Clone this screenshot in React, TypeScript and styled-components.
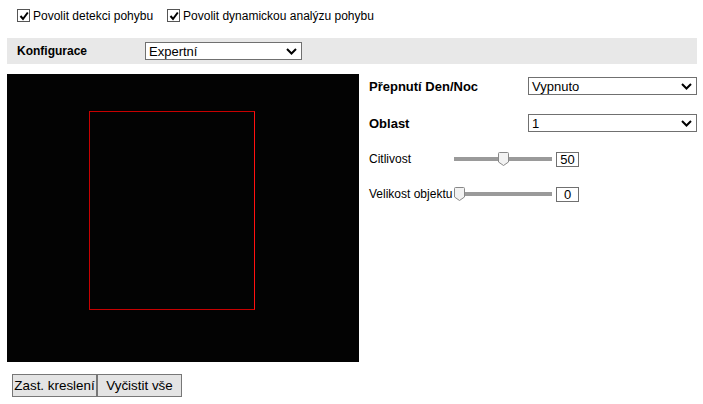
import React from 'react';
import styled, { createGlobalStyle } from 'styled-components';

const GlobalStyle = createGlobalStyle`
  html, body {
    margin: 0;
    padding: 0;
    background: #fff;
    font-family: "Liberation Sans", Arial, sans-serif;
    font-size: 12px;
    color: #000;
  }
`;

const Page = styled.div`
  width: 703px;
  height: 404px;
  padding-left: 7px;
  box-sizing: border-box;
`;

const CheckRow = styled.div`
  display: flex;
  align-items: center;
  gap: 14px;
  height: 31px;
  padding-left: 10px;
`;

const CheckLabel = styled.label`
  display: flex;
  align-items: center;
  gap: 3px;
  font-size: 12px;
`;

const Box = styled.span`
  width: 11px;
  height: 11px;
  border: 1px solid #555;
  background: #fff;
  display: flex;
  align-items: center;
  justify-content: center;
`;

const ConfigBar = styled.div`
  width: 690px;
  height: 26px;
  margin-top: 7px;
  background: #e8e8e8;
  display: flex;
  align-items: center;
  padding-left: 10px;
  box-sizing: border-box;
`;

const BarLabel = styled.span`
  width: 128px;
  font-weight: bold;
  font-size: 12px;
`;

const SelectBox = styled.div<{ $width: number }>`
  width: ${p => p.$width}px;
  height: 18px;
  box-sizing: border-box;
  border: 1px solid #707070;
  background: #fff;
  display: flex;
  align-items: center;
  justify-content: space-between;
  padding: 0 4px 0 3px;
  font-size: 13px;
`;

const Main = styled.div`
  display: flex;
  margin-top: 10px;
  gap: 10px;
`;

const Video = styled.div`
  width: 352px;
  height: 288px;
  background: #030303;
  position: relative;
`;

const Region = styled.div`
  position: absolute;
  left: 82px;
  top: 37px;
  width: 164px;
  height: 197px;
  border: 1px solid #c80000;
  border-right-color: #ff1010;
`;

const Panel = styled.div`
  display: flex;
  flex-direction: column;
  padding-top: 3px;
`;

const FieldRow = styled.div`
  display: flex;
  align-items: center;
  height: 18px;
  margin-bottom: 19px;
`;

const FieldLabel = styled.span`
  width: 159px;
  font-weight: bold;
  font-size: 13px;
`;

const SliderRow = styled.div`
  display: flex;
  align-items: center;
  height: 16px;
  margin-bottom: 19px;
`;

const SliderLabel = styled.span`
  width: 85px;
  white-space: nowrap;
  font-size: 12px;
`;

const Track = styled.div`
  position: relative;
  width: 98px;
  height: 16px;
  display: flex;
  align-items: center;
`;

const TrackLine = styled.div`
  width: 100%;
  height: 4px;
  background: #9a9a9a;
`;

const Thumb = styled.svg`
  position: absolute;
  top: 1px;
  width: 11px;
  height: 14px;
`;

const ValueBox = styled.div`
  width: 23px;
  height: 15px;
  margin-left: 4px;
  box-sizing: border-box;
  border: 1px solid #707070;
  display: flex;
  align-items: center;
  justify-content: center;
  font-size: 13px;
`;

const ButtonRow = styled.div`
  display: flex;
  margin-top: 12px;
  padding-left: 5px;
`;

const Button = styled.button`
  min-width: 85px;
  height: 23px;
  padding: 0 1px;
  border: 1px solid #777;
  background: #e4e4e4;
  font-family: "Liberation Sans", Arial, sans-serif;
  font-size: 13.4px;
  color: #000;
  margin: 0;
`;

const Chevron = () => (
  <svg width="11" height="7" viewBox="0 0 11 7">
    <path d="M1 1 L5.5 5.5 L10 1" fill="none" stroke="#000" strokeWidth="2" />
  </svg>
);

const Check = () => (
  <svg width="10" height="10" viewBox="0 0 10 10">
    <path d="M1.5 5 L4 8 L8.8 1.5" fill="none" stroke="#000" strokeWidth="2" />
  </svg>
);

const Checkbox: React.FC<{ label: string }> = ({ label }) => (
  <CheckLabel>
    <Box>
      <Check />
    </Box>
    {label}
  </CheckLabel>
);

const Select: React.FC<{ value: string; width: number }> = ({ value, width }) => (
  <SelectBox $width={width}>
    <span>{value}</span>
    <Chevron />
  </SelectBox>
);

const Slider: React.FC<{ label: string; value: number }> = ({ label, value }) => (
  <SliderRow>
    <SliderLabel>{label}</SliderLabel>
    <Track>
      <TrackLine />
      <Thumb viewBox="0 0 11 14" style={{ left: (value / 100) * 87 }}>
        <path
          d="M1.5 0.5 H9.5 Q10.5 0.5 10.5 1.5 V10 L5.5 13.5 L0.5 10 V1.5 Q0.5 0.5 1.5 0.5 Z"
          fill="#f2f2f2"
          stroke="#888"
        />
      </Thumb>
    </Track>
    <ValueBox>{value}</ValueBox>
  </SliderRow>
);

export default function App() {
  return (
    <>
      <GlobalStyle />
      <Page>
        <CheckRow>
          <Checkbox label="Povolit detekci pohybu" />
          <Checkbox label="Povolit dynamickou analýzu pohybu" />
        </CheckRow>
        <ConfigBar>
          <BarLabel>Konfigurace</BarLabel>
          <Select value="Expertní" width={157} />
        </ConfigBar>
        <Main>
          <Video>
            <Region />
          </Video>
          <Panel>
            <FieldRow>
              <FieldLabel>Přepnutí Den/Noc</FieldLabel>
              <Select value="Vypnuto" width={169} />
            </FieldRow>
            <FieldRow>
              <FieldLabel>Oblast</FieldLabel>
              <Select value="1" width={169} />
            </FieldRow>
            <Slider label="Citlivost" value={50} />
            <Slider label="Velikost objektu" value={0} />
          </Panel>
        </Main>
        <ButtonRow>
          <Button>Zast. kreslení</Button>
          <Button>Vyčistit vše</Button>
        </ButtonRow>
      </Page>
    </>
  );
}
